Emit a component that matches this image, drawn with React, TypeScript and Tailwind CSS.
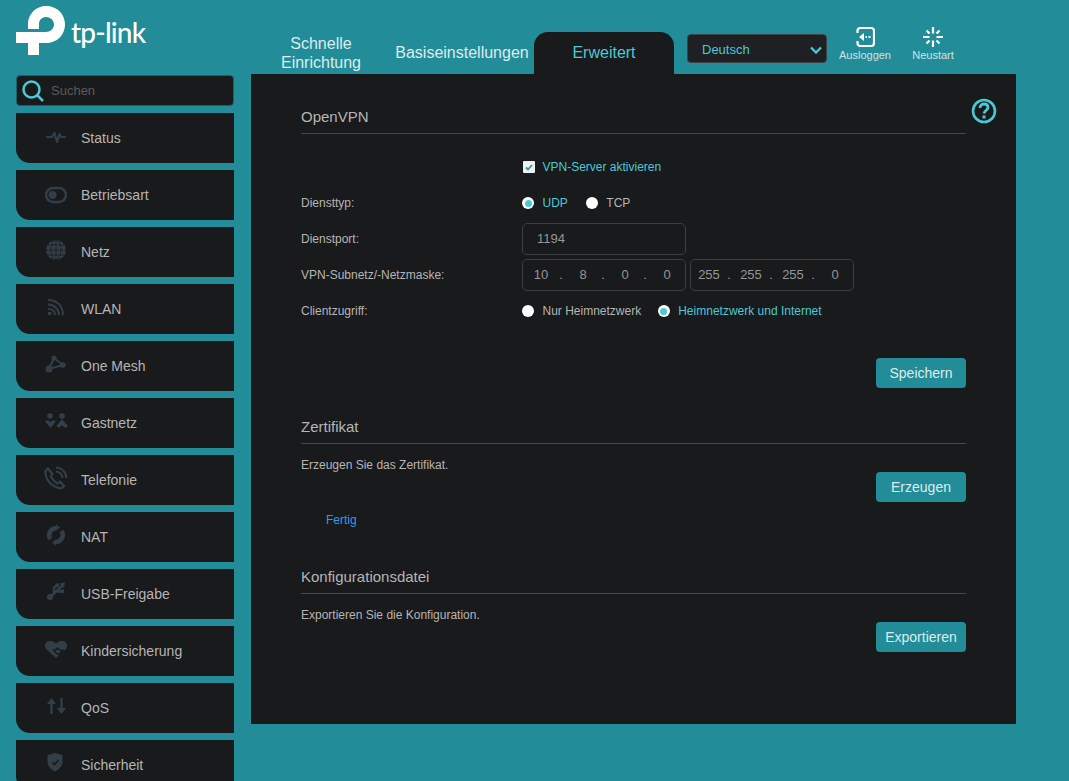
import React from "react";

const ICON = "#323f48";
const ACCENT = "#4bc8d6";
const PANEL = "#191a1c";

function Logo() {
  return (
    <div className="flex items-start h-[51px] text-white">
      <svg width="50" height="50" viewBox="0 0 50 50" fill="white" className="shrink-0">
        <path d="M12 23V18C12 8 20 0 30 0C41 0 49 8 49 18.500C49 29 41 37 30 37H23V49H12V37H0V26H30C34 26 38 23 38 18.500C38 14 34 11 30 11C26 11 23 14 23 18V23Z" />
      </svg>
      <span className="ml-[5px] mt-[9px] font-['Lato',sans-serif] font-medium text-[28px] leading-[34px] tracking-[-0.8px] text-white">
        tp-link
      </span>
    </div>
  );
}

const sv = { width: 24, height: 24, viewBox: "0 0 24 24" };

function Status() {
  return (
    <svg {...sv} fill="none" stroke={ICON} strokeWidth="2.200" strokeLinejoin="round">
      <path d="M2 12H8L10.500 8L13 17L15.500 9L17 12H22" />
    </svg>
  );
}
function Toggle() {
  return (
    <svg {...sv} fill="none" stroke={ICON} strokeWidth="2.500">
      <rect x="2" y="5" width="20" height="14" rx="7" />
      <circle cx="8.500" cy="12" r="4" fill={ICON} stroke="none" />
    </svg>
  );
}
function Globe() {
  return (
    <svg {...sv}>
      <circle cx="12" cy="12" r="10" fill={ICON} />
      <g fill="none" stroke={PANEL} strokeWidth="1" strokeDasharray="2.500 1">
        <ellipse cx="12" cy="12" rx="5" ry="10" />
        <path d="M12 2V22M2 12H22M3.500 7H20.500M3.500 17H20.500" />
      </g>
    </svg>
  );
}
function Wifi() {
  return (
    <svg {...sv} fill="none" stroke={ICON} strokeWidth="2">
      <path d="M4 5C13 5 19 11 19 20M4 9.500C10 9.500 15 14 15 20M4 14C8 14 11 16 11 20" />
      <rect x="4" y="17" width="3.500" height="3" fill={ICON} stroke="none" />
    </svg>
  );
}
function Mesh() {
  return (
    <svg {...sv} fill={ICON} stroke={ICON}>
      <path d="M10 6L5 17L19 13Z" fill="none" strokeWidth="2" />
      <circle cx="10" cy="6" r="2.500" stroke="none" />
      <circle cx="5" cy="17" r="3.500" stroke="none" />
      <circle cx="19" cy="13" r="2.800" stroke="none" />
    </svg>
  );
}
function Guests() {
  return (
    <svg {...sv} fill={ICON}>
      <circle cx="6" cy="7" r="2.800" />
      <circle cx="18" cy="7" r="2.800" />
      <path d="M1 12.500L3.500 11L6.500 13L9.500 11L12 12.500L6.500 19Z" />
      <path d="M18 10L24 17L21.500 19L18 16.500L14.500 19L12.500 17Z" />
    </svg>
  );
}
function Phone() {
  return (
    <svg {...sv} fill="none" stroke={ICON} strokeWidth="2.200" strokeLinejoin="round">
      <path d="M4 2.500L1.500 5C1 11 4 15 7 18C10 20.500 13 22 17.500 22.500L20 20L16 15.500L13.500 17.500C11 16 8.500 13.500 6.800 10.500L8.500 8Z" />
      <path d="M12 5.500C15.500 6 18 8.500 18.500 12M12 1.500C18 2 22 6 22.500 12" />
    </svg>
  );
}
function Nat() {
  return (
    <svg {...sv} fill="none" stroke={ICON} strokeWidth="4.500">
      <path d="M6.500 16A6.800 6.800 0 0 1 13 5.300" />
      <path d="M17.500 8A6.800 6.800 0 0 1 11 18.700" />
      <path d="M12 1.500L16 4.500L12 7.500Z" fill={ICON} stroke="none" />
      <path d="M12 22.500L8 19.500L12 16.500Z" fill={ICON} stroke="none" />
    </svg>
  );
}
function Usb() {
  return (
    <svg {...sv} fill={ICON} stroke={ICON}>
      <path d="M6 19L18 8M10 15V9.500L13 7.500M12.500 13.500L18 13.500" fill="none" strokeWidth="2.500" />
      <circle cx="6" cy="19" r="3" stroke="none" />
      <path d="M15.500 5.500L21 4.500L20 10Z" stroke="none" />
      <rect x="11.500" y="5.500" width="3.500" height="3.500" stroke="none" />
      <rect x="16.500" y="11.500" width="3.500" height="3.500" stroke="none" />
    </svg>
  );
}
function Heart() {
  return (
    <svg {...sv}>
      <path d="M12 21L2.500 12.500C-0.500 9 1 4 6 4C9 4 11 5 12 7C13 5 15 4 18 4C23 4 24.500 9 21.500 12.500Z" fill={ICON} />
      <path d="M13 18L8 12.500H10.500L13.500 10L16 12.500H20C20.500 13 20 14 19 15L15 18.500Z" fill={PANEL} />
      <path d="M13.500 16.500L11 13.800H11.500L13.500 12.300L15.500 13.800H17.500L14.500 16.500Z" fill={ICON} />
    </svg>
  );
}
function Qos() {
  return (
    <svg {...sv} fill={ICON} stroke={ICON} strokeWidth="2.200">
      <path d="M7.500 8V20M17.500 4V16" fill="none" />
      <path d="M7.500 4L3 10H12Z" stroke="none" />
      <path d="M17.500 20L13 14H22Z" stroke="none" />
    </svg>
  );
}
function Shield() {
  return (
    <svg {...sv}>
      <path d="M11 2L18.500 4V11C18.500 15 15 18.500 11 20.500C7 18.500 3.500 15 3.500 11V4Z" fill={ICON} />
      <path d="M8 11L10.500 13.500L14.500 9" fill="none" stroke={PANEL} strokeWidth="1.600" />
    </svg>
  );
}

const items: [string, React.ReactNode, string][] = [
  ["Status", <Status />, "-mt-0.5"],
  ["Betriebsart", <Toggle />, ""],
  ["Netz", <Globe />, "-mt-1"],
  ["WLAN", <Wifi />, "-mt-1"],
  ["One Mesh", <Mesh />, "-mt-1"],
  ["Gastnetz", <Guests />, "-mt-1"],
  ["Telefonie", <Phone />, "-mt-1"],
  ["NAT", <Nat />, "-mt-1"],
  ["USB-Freigabe", <Usb />, "-mt-2"],
  ["Kindersicherung", <Heart />, "-mt-1"],
  ["QoS", <Qos />, "-mt-1"],
  ["Sicherheit", <Shield />, "-mt-1"],
];

function SideItem({ label, icon, adjust }: { label: string; icon: React.ReactNode; adjust: string }) {
  return (
    <div className="flex items-center h-[50px] w-[218px] shrink-0 bg-[#191a1c] rounded-bl-[14px] pl-[28px] text-[14px] text-[#b5b5b5]">
      <div className={`w-[24px] h-[24px] shrink-0 ${adjust}`}>{icon}</div>
      <span className="ml-[13px]">{label}</span>
    </div>
  );
}

function Section({ title }: { title: string }) {
  return (
    <div className="h-[30px] border-b border-[#47484b] text-[15px] leading-[26px] text-[#b5b5b5]">{title}</div>
  );
}

function Button({ children }: { children: React.ReactNode }) {
  return (
    <div className="self-end flex items-center justify-center w-[90px] h-[30px] rounded-[4px] bg-[#228d98] text-[14px] text-[#dcecee]">
      {children}
    </div>
  );
}

function Radio({ on, label }: { on?: boolean; label: string }) {
  return (
    <div className="flex items-center">
      <span className="flex items-center justify-center w-[12px] h-[12px] rounded-full bg-white">
        {on && <span className="w-[7px] h-[7px] rounded-full bg-[#4bc8d6]" />}
      </span>
      <span className={`ml-[8.5px] ${on ? "text-[#4bc8d6]" : "text-[#b5b5b5]"}`}>{label}</span>
    </div>
  );
}

function Row({ label, children }: { label?: string; children: React.ReactNode }) {
  return (
    <div className="flex items-center h-[36px]">
      <div className="w-[221px] text-[#b5b5b5]">{label}</div>
      {children}
    </div>
  );
}

function IpBox({ parts }: { parts: string[] }) {
  return (
    <div className="flex items-center w-[164px] h-[32px] pl-[4px] rounded-[5px] border border-[#3d3e41] text-[13px] text-[#969696]">
      {parts.map((p, i) => (
        <React.Fragment key={i}>
          <span className="w-[28px] text-center">{p}</span>
          {i < 3 && <span className="w-[14px] text-center -translate-x-px">.</span>}
        </React.Fragment>
      ))}
    </div>
  );
}

export default function App() {
  return (
    <div className="flex h-[781px] w-[1069px] overflow-hidden bg-[#228d98] font-['Liberation_Sans',Arial,sans-serif]">
      <aside className="w-[251px] shrink-0 pl-[16px] pt-[6px]">
        <Logo />
        <div className="flex items-center w-[218px] h-[31px] mt-[18px] rounded-[4px] border border-[#1f5f68] bg-[#191a1c]">
          <svg width="22" height="22" viewBox="0 0 22 22" fill="none" stroke={ACCENT} strokeWidth="2.500" className="ml-[5px] shrink-0">
            <circle cx="9.500" cy="9.500" r="8" />
            <path d="M15.500 15.500L21 21" />
          </svg>
          <span className="ml-[7px] text-[13px] text-[#5a5a5a]">Suchen</span>
        </div>
        <div className="flex flex-col gap-[7px] mt-[7px]">
          {items.map(([label, icon, adjust]) => (
            <SideItem key={label} label={label} icon={icon} adjust={adjust} />
          ))}
        </div>
      </aside>

      <div className="w-[765px] shrink-0">
        <header className="flex items-end h-[74px]">
          <div className="flex items-center justify-center w-[140px] h-[42px] text-center text-[16px] leading-[19px] text-[#dcecee]">
            <span>Schnelle<br />Einrichtung</span>
          </div>
          <div className="flex items-center justify-center w-[140px] h-[42px] ml-[1px] text-[16px] text-[#dcecee] whitespace-nowrap">
            Basiseinstellungen
          </div>
          <div className="flex items-center justify-center w-[140px] h-[42px] ml-[2px] rounded-t-[14px] bg-[#191a1c] text-[16px] text-[#4bc8d6]">
            Erweitert
          </div>
          <div className="flex items-center justify-between self-start w-[140px] h-[29px] mt-[34px] ml-[13px] pl-[14px] pr-[4px] pt-[2px] rounded-[4px] border border-[#3c4447] bg-[#1e2023] text-[13px] text-[#4bc8d6]">
            Deutsch
            <svg width="12" height="8" viewBox="0 0 12 8" fill="none" stroke={ACCENT} strokeWidth="2.400">
              <path d="M1 1.500L6 6.500L11 1.500" />
            </svg>
          </div>
          <div className="flex flex-col items-center self-start w-[60px] mt-[27px] ml-[8px] text-[11px] leading-[13px] text-[#d0e2e4]">
            <svg width="19" height="20" viewBox="0 0 19 20" fill="none" stroke="white" strokeWidth="2.200">
              <path d="M1.500 6V4C1.500 2 2.500 1 4.500 1H15C17 1 18 2 18 4V16C18 18 17 19 15 19H4.500C2.500 19 1.500 18 1.500 16V14" />
              <path d="M9.500 10H11M12.500 10H14.500" strokeWidth="2" />
              <path d="M8 6L3 10L8 14Z" fill="white" stroke="none" />
            </svg>
            <span className="mt-[2px]">Ausloggen</span>
          </div>
          <div className="flex flex-col items-center self-start w-[60px] mt-[27px] ml-[8px] text-[11px] leading-[13px] text-[#d0e2e4]">
            <svg width="20" height="20" viewBox="0 0 20 20" fill="none" stroke="white" strokeWidth="2.200">
              <path d="M10 0V6.500M10 13.500V20M0 10H6.500M13.500 10H20M3.500 3.500L6.500 6.500M13.500 13.500L16.500 16.500M3.500 16.500L6.500 13.500M13.500 6.500L16.500 3.500" />
            </svg>
            <span className="mt-[2px]">Neustart</span>
          </div>
        </header>

        <main className="relative flex flex-col h-[650px] px-[50px] pt-[30px] bg-[#191a1c] text-[12px]">
          <svg width="26" height="26" viewBox="0 0 26 26" fill="none" stroke={ACCENT} strokeWidth="2.600" className="absolute top-[24px] right-[19px]">
            <circle cx="13" cy="13" r="11" />
            <path d="M9 10C9 7.500 11 6 13 6C15.500 6 17 7.500 17 9.500C17 12 13.500 12.500 13 15.500" strokeWidth="2.800" />
            <path d="M13 17.500V20.500" strokeWidth="3" />
          </svg>

          <Section title="OpenVPN" />
          <div className="flex flex-col mt-[15px]">
            <Row>
              <span className="flex items-center justify-center w-[12px] h-[12px] ml-[1px] rounded-[1px] bg-[#f0f0f0]">
                <svg width="8" height="7" viewBox="0 0 8 7" fill="none" stroke="#2a9aa8" strokeWidth="1.800">
                  <path d="M1 3.500L3 5.500L7 1" />
                </svg>
              </span>
              <span className="ml-[7.5px] text-[#4bc8d6]">VPN-Server aktivieren</span>
            </Row>
            <Row label="Diensttyp:">
              <div className="flex gap-[18px]">
                <Radio on label="UDP" />
                <Radio label="TCP" />
              </div>
            </Row>
            <Row label="Dienstport:">
              <div className="flex items-center w-[164px] h-[32px] pl-[14px] rounded-[5px] border border-[#3d3e41] text-[13px] text-[#969696]">
                1194
              </div>
            </Row>
            <Row label="VPN-Subnetz/-Netzmaske:">
              <div className="flex gap-[4px]">
                <IpBox parts={["10", "8", "0", "0"]} />
                <IpBox parts={["255", "255", "255", "0"]} />
              </div>
            </Row>
            <Row label="Clientzugriff:">
              <div className="flex gap-[16.5px]">
                <Radio label="Nur Heimnetzwerk" />
                <Radio on label="Heimnetzwerk und Internet" />
              </div>
            </Row>
          </div>

          <div className="self-end mt-[29px]">
            <Button>Speichern</Button>
          </div>

          <div className="mt-[26px]">
            <Section title="Zertifikat" />
          </div>
          <div className="mt-[12px] h-[18px] leading-[18px] text-[#b5b5b5]">Erzeugen Sie das Zertifikat.</div>
          <div className="self-end -mt-[2px]">
            <Button>Erzeugen</Button>
          </div>
          <div className="mt-[9px] ml-[25px] h-[18px] leading-[18px] text-[#2b9fe6]">Fertig</div>

          <div className="mt-[35px]">
            <Section title="Konfigurationsdatei" />
          </div>
          <div className="mt-[12px] h-[18px] leading-[18px] text-[#b5b5b5]">Exportieren Sie die Konfiguration.</div>
          <div className="self-end -mt-[2px]">
            <Button>Exportieren</Button>
          </div>
        </main>
      </div>
    </div>
  );
}
